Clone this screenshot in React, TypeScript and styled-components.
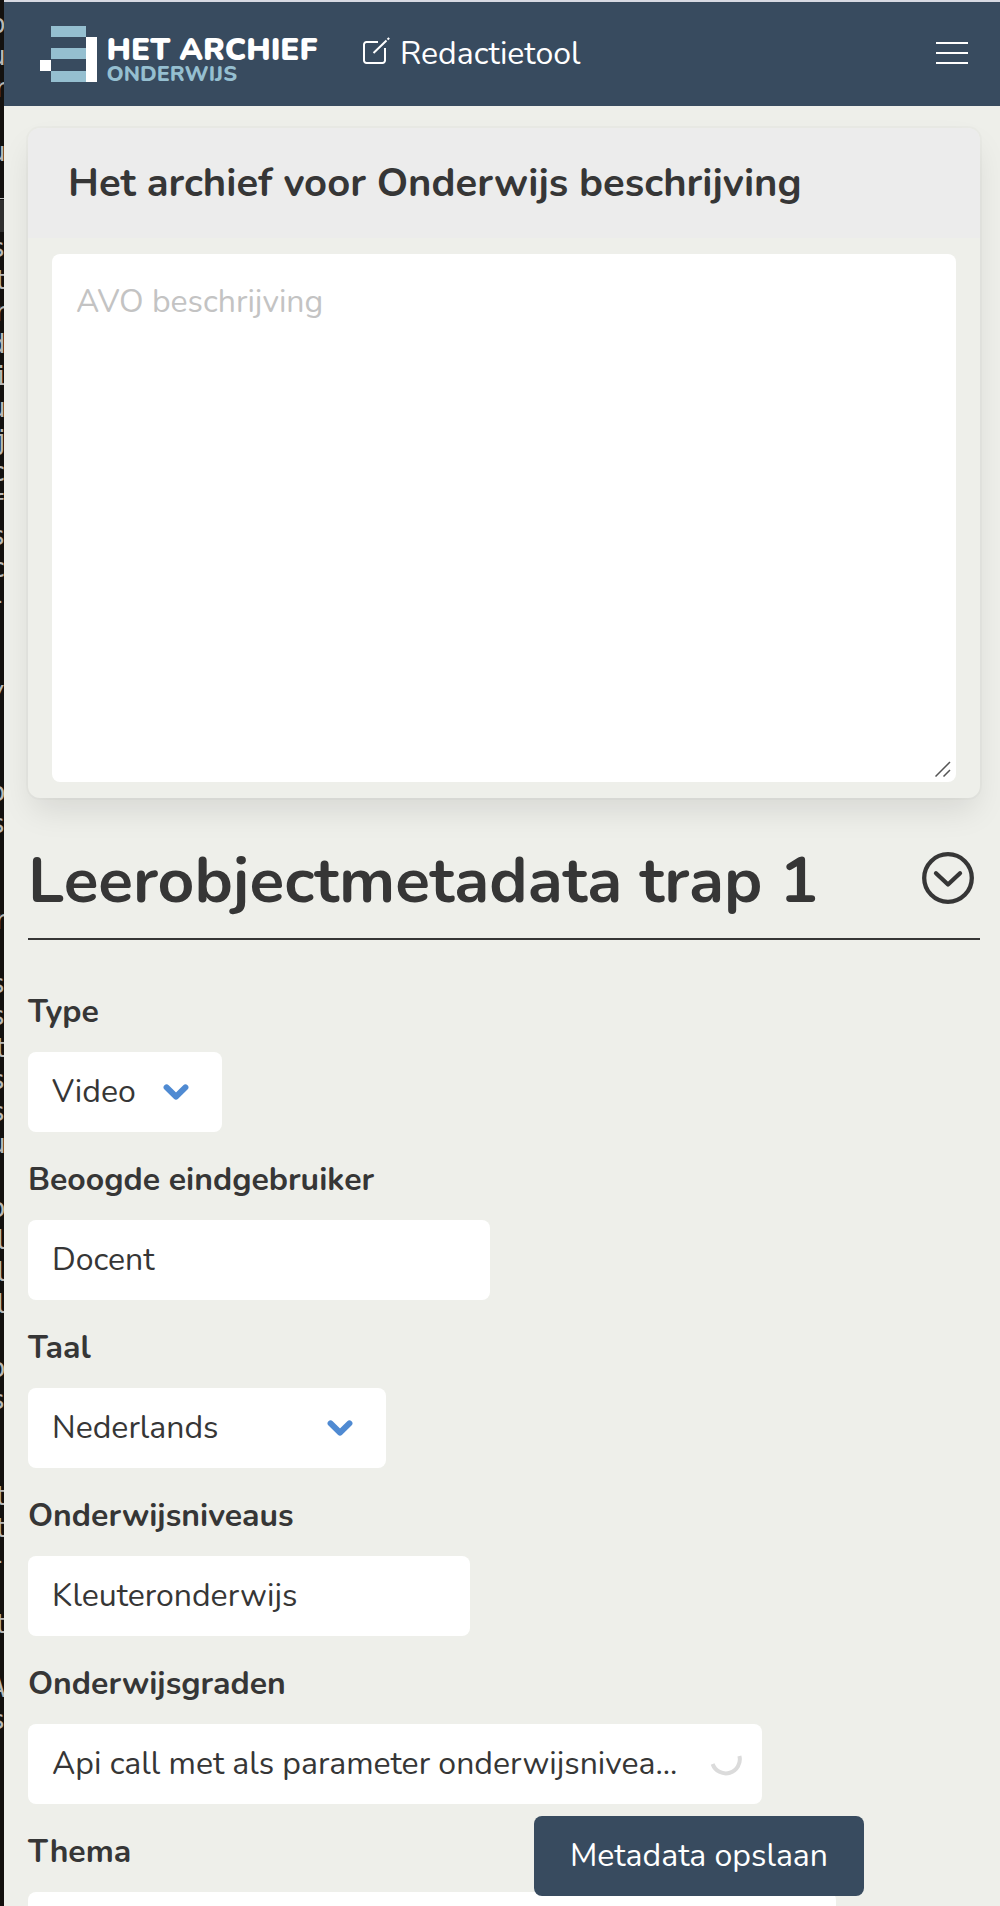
import React from "react";
import styled, { createGlobalStyle } from "styled-components";

const INK = "#363636";
const NAVY = "#384b5f";
const PAPER = "#eeefea";
const AQUA = "#95bfd0";

const GlobalStyle = createGlobalStyle`
  *, *::before, *::after { box-sizing: border-box; }
  body {
    margin: 0;
    background: ${PAPER};
    color: ${INK};
    font-family: Nunito, "Nunito Sans", Lato, "Open Sans", sans-serif;
    font-size: 32px;
    line-height: 48px;
    -webkit-font-smoothing: antialiased;
  }
  h1, h2 { margin: 0; }
`;

const Screen = styled.div`
  display: grid;
  grid-template-columns: 4px minmax(0, 1fr);
  width: 1000px;
  height: 1906px;
  overflow: hidden;
`;

const Gutter = styled.aside`
  display: flex;
  flex-direction: column;
  padding-top: 8px;
  overflow: hidden;
  background: #13110f;
`;

const GutterRow = styled.span<{ $active: boolean; $shift: number }>`
  flex: none;
  height: 32px;
  width: 4px;
  text-indent: -${(p) => p.$shift}px;
  font: 26px/32px "DejaVu Sans Mono", monospace;
  color: #b9b9b7;
  background: ${(p) => (p.$active ? "#302f2f" : "transparent")};
`;

const Page = styled.div`
  display: flex;
  flex-direction: column;
  min-width: 0;
  border-top: 2px solid #d7d9e2;
`;

const Navbar = styled.header`
  flex: none;
  display: flex;
  align-items: center;
  height: 104px;
  padding: 0 32px 0 36px;
  background: ${NAVY};
  color: #fff;
`;

const NavLink = styled.a`
  display: flex;
  align-items: center;
  margin-left: 40px;
  gap: 10px;
`;

const Burger = styled.button`
  display: grid;
  gap: 8px;
  width: 32px;
  margin: -2px 0 0 auto;
  padding: 0;
  border: 0;
  background: none;
`;

const BurgerLine = styled.span`
  height: 2px;
  background: #fff;
`;

const Content = styled.main`
  flex: 1;
  min-height: 0;
  padding: 22px 20px 0 24px;
`;

const Card = styled.section`
  height: 670px;
  border-radius: 12px;
  background: ${PAPER};
  box-shadow: 0 16px 32px -4px rgba(10, 10, 10, 0.1), 0 0 0 2px rgba(10, 10, 10, 0.02);
`;

const CardHeader = styled.header`
  display: flex;
  align-items: center;
  height: 110px;
  padding: 0 40px;
  border-radius: 12px 12px 0 0;
  background: #ececec;
`;

const CardTitle = styled.h2`
  font-size: 40px;
  line-height: 60px;
  font-weight: 700;
`;

const CardBody = styled.div`
  padding: 16px 24px;
`;

const TextArea = styled.div`
  display: flex;
  flex-direction: column;
  justify-content: space-between;
  height: 528px;
  padding: 24px 5px 5px 24px;
  border-radius: 8px;
  background: #fff;
  color: #c3c3c3;
`;

const Grip = styled.svg`
  align-self: flex-end;
`;

const SectionHead = styled.div`
  display: flex;
  align-items: center;
  justify-content: space-between;
  height: 142px;
  padding: 19px 6px 0 0;
  border-bottom: 2px solid ${INK};
`;

const SectionTitle = styled.h1`
  padding-top: 7px;
  font-size: 64px;
  line-height: 72px;
  font-weight: 700;
`;

const Form = styled.form`
  display: grid;
  gap: 24px;
  padding-top: 48px;
`;

const Field = styled.div`
  display: grid;
  justify-items: start;
  gap: 16px;
`;

const Label = styled.label`
  font-weight: 700;
`;

const Control = styled.div<{ $width: number }>`
  display: flex;
  align-items: center;
  justify-content: space-between;
  width: ${(p) => p.$width}px;
  height: 80px;
  padding: 0 20px 0 24px;
  border-radius: 8px;
  background: #fff;
  white-space: nowrap;
`;

const Chevron = styled.svg`
  margin-right: 12px;
`;

const SpinnerIcon = styled.svg`
  margin-top: -8px;
`;

const EditGlyph = styled.svg`
  margin-top: -7px;
`;

const SaveButton = styled.button`
  position: fixed;
  left: 534px;
  top: 1816px;
  width: 330px;
  height: 80px;
  padding: 0;
  border: 0;
  border-radius: 8px;
  background: ${NAVY};
  color: #fff;
  font: inherit;
`;

const gutterRows = (
  "p,u,r,,u,_,*,s,t,r,d,i,u,j,c,f,s,c,-,,,/,,,o,s,,,r,,s,s,t,s,s,u,,o,l,l,l,,o,s,,,t,t,-,,t,,A,s"
).split(",");

const Logo = () => (
  <svg width="282" height="60" viewBox="0 0 282 60" aria-label="Het Archief Onderwijs">
    <g fill={AQUA}>
      <rect x="11" y="2" width="35" height="11" />
      <rect x="11" y="24" width="35" height="11" />
      <rect x="11" y="47" width="35" height="11" />
    </g>
    <rect x="0" y="36" width="11" height="11" fill="#fff" />
    <rect x="46" y="13" width="11" height="45" fill="#fff" />
    <g fontFamily="Nunito, Lato, sans-serif">
      <text x="66.500" y="35.800" fontSize="31" fontWeight="900" fill="#fff" textLength="211" lengthAdjust="spacingAndGlyphs">HET ARCHIEF</text>
      <text x="66.500" y="57.300" fontSize="21.500" fontWeight="800" fill={AQUA} textLength="130.500" lengthAdjust="spacingAndGlyphs">ONDERWIJS</text>
    </g>
  </svg>
);

const EditIcon = () => (
  <EditGlyph width="28" height="28" viewBox="0 0 28 28" fill="none" stroke="#fff" strokeWidth="2">
    <path d="M16 5H4.500A2.500 2.500 0 0 0 2 7.500v16A2.500 2.500 0 0 0 4.500 26h16a2.500 2.500 0 0 0 2.500-2.500V11" />
    <path d="M11.500 16L24.500 3.500M25.500 2.600l1.700-1.600" />
  </EditGlyph>
);

const SelectChevron = () => (
  <Chevron width="28" height="20" viewBox="0 0 28 20" fill="none" stroke="#4f8ad2" strokeWidth="6">
    <path d="M4.600 5.400L14 14.600L23.400 5.400" strokeLinecap="round" strokeLinejoin="round" />
  </Chevron>
);

const Spinner = () => (
  <SpinnerIcon width="32" height="32" viewBox="0 0 32 32" fill="none" stroke="#dbdbdb" strokeWidth="4">
    <path d="M2.600 20A14 14 0 0 0 29.400 12" />
  </SpinnerIcon>
);

type FieldData = { label: string; value: string; width: number; kind?: "select" | "loading" };

const fields: FieldData[] = [
  { label: "Type", value: "Video", width: 194, kind: "select" },
  { label: "Beoogde eindgebruiker", value: "Docent", width: 462 },
  { label: "Taal", value: "Nederlands", width: 358, kind: "select" },
  { label: "Onderwijsniveaus", value: "Kleuteronderwijs", width: 442 },
  { label: "Onderwijsgraden", value: "Api call met als parameter onderwijsnivea...", width: 734, kind: "loading" },
  { label: "Thema", value: "", width: 808 },
];

export default function App() {
  return (
    <>
      <GlobalStyle />
      <Screen>
        <Gutter aria-hidden>
          {gutterRows.map((g, i) => (
            <GutterRow key={i} $active={g === "*"} $shift={"ijlrt".includes(g) ? 7 : 10}>
              {g === "*" ? "" : g}
            </GutterRow>
          ))}
        </Gutter>
        <Page>
          <Navbar>
            <Logo />
            <NavLink>
              <EditIcon />
              Redactietool
            </NavLink>
            <Burger aria-label="Menu">
              <BurgerLine />
              <BurgerLine />
              <BurgerLine />
            </Burger>
          </Navbar>
          <Content>
            <Card>
              <CardHeader>
                <CardTitle>Het archief voor Onderwijs beschrijving</CardTitle>
              </CardHeader>
              <CardBody>
                <TextArea>
                  AVO beschrijving
                  <Grip width="16" height="16" viewBox="0 0 16 16" stroke="#555" strokeWidth="1.500">
                    <path d="M0.500 15.500L15 1M8.500 15.500L15 9" />
                  </Grip>
                </TextArea>
              </CardBody>
            </Card>
            <SectionHead>
              <SectionTitle>Leerobjectmetadata trap 1</SectionTitle>
              <svg width="52" height="52" viewBox="0 0 52 52" fill="none" stroke={INK} strokeWidth="4.300" strokeLinecap="round" strokeLinejoin="round">
                <circle cx="26" cy="26" r="23.800" />
                <path d="M14 21.300L26 32.500L38 21.300" />
              </svg>
            </SectionHead>
            <Form>
              {fields.map((f) => (
                <Field key={f.label}>
                  <Label>{f.label}</Label>
                  <Control $width={f.width}>
                    <span>{f.value}</span>
                    {f.kind === "select" && <SelectChevron />}
                    {f.kind === "loading" && <Spinner />}
                  </Control>
                </Field>
              ))}
            </Form>
          </Content>
        </Page>
      </Screen>
      <SaveButton>Metadata opslaan</SaveButton>
    </>
  );
}
